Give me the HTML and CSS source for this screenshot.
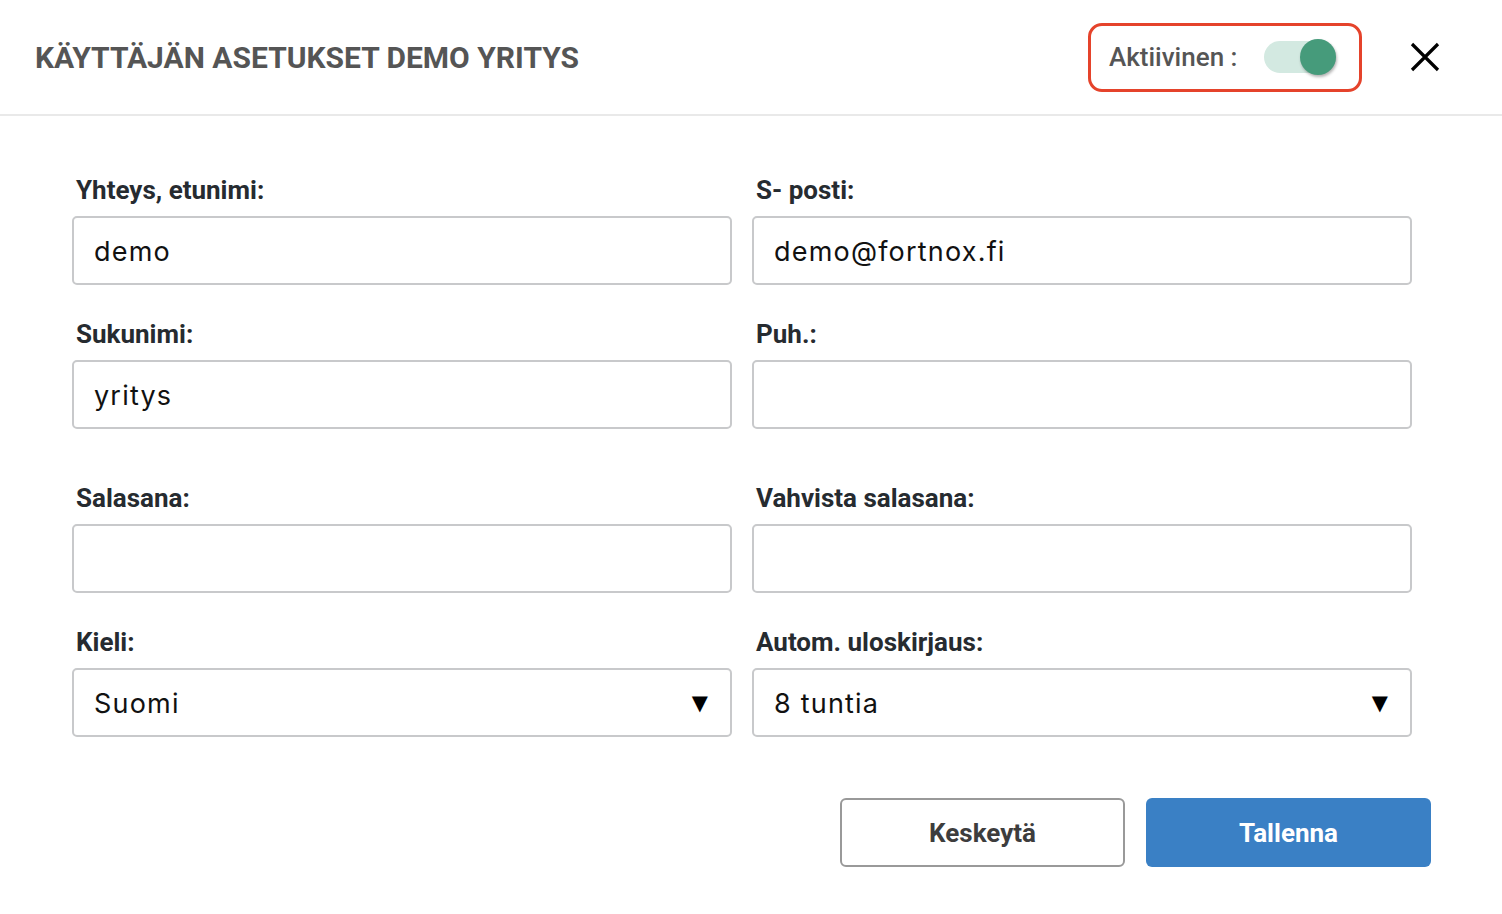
FILE: index.html
```html
<!DOCTYPE html>
<html lang="fi">
<head>
    <meta charset="UTF-8">
    <meta name="viewport" content="width=device-width, initial-scale=1.0">
    <title>Käyttäjän asetukset</title>
    <link rel="stylesheet" href="styles.css">
</head>
<body>

    <div class="modal">
        <!-- Otsikko ja aktiivinen-kytkin -->
        <div class="modal-header">
            <h1>KÄYTTÄJÄN ASETUKSET DEMO YRITYS</h1>
            <div class="header-actions">
                <label class="status-box">
                    <span>Aktiivinen :</span>
                    <span class="switch">
                        <span class="switch-knob"></span>
                    </span>
                </label>
                <button class="close-button" aria-label="Sulje">
                    <svg width="30" height="30" viewBox="0 0 30 30">
                        <path d="M2 2 L28 28 M28 2 L2 28" stroke="#000" stroke-width="3.2" fill="none"/>
                    </svg>
                </button>
            </div>
        </div>

        <!-- Lomake -->
        <div class="modal-body">
            <div class="form-grid">
                <div class="field">
                    <label>Yhteys, etunimi:</label>
                    <input type="text" value="demo">
                </div>
                <div class="field">
                    <label>S- posti:</label>
                    <input type="text" value="demo@fortnox.fi">
                </div>
                <div class="field">
                    <label>Sukunimi:</label>
                    <input type="text" value="yritys">
                </div>
                <div class="field">
                    <label>Puh.:</label>
                    <input type="text" value="">
                </div>
                <div class="field spaced">
                    <label>Salasana:</label>
                    <input type="password" value="">
                </div>
                <div class="field spaced">
                    <label>Vahvista salasana:</label>
                    <input type="password" value="">
                </div>
                <div class="field">
                    <label>Kieli:</label>
                    <div class="select-wrap">
                        <select>
                            <option>Suomi</option>
                            <option>Svenska</option>
                            <option>English</option>
                        </select>
                        <span class="select-arrow">▼</span>
                    </div>
                </div>
                <div class="field">
                    <label>Autom. uloskirjaus:</label>
                    <div class="select-wrap">
                        <select>
                            <option>8 tuntia</option>
                            <option>4 tuntia</option>
                            <option>1 tunti</option>
                        </select>
                        <span class="select-arrow">▼</span>
                    </div>
                </div>
            </div>

            <div class="modal-footer">
                <button class="btn btn-cancel">Keskeytä</button>
                <button class="btn btn-save">Tallenna</button>
            </div>
        </div>
    </div>

</body>
</html>
```

FILE: styles.css
```css
html, body {
    margin: 0;
    padding: 0;
    background-color: #fff;
}

body {
    font-family: Roboto, "Liberation Sans", sans-serif;
}

.modal-header {
    display: flex;
    align-items: center;
    justify-content: space-between;
    height: 114px;
    padding: 0 62px 0 35px;
    border-bottom: 2px solid #e9e9e9;
}

.modal-header h1 {
    margin: 0;
    font-size: 30px;
    font-weight: 700;
    color: #555;
}

.header-actions {
    display: flex;
    align-items: center;
    gap: 48px;
}

.status-box {
    display: flex;
    align-items: center;
    justify-content: space-between;
    box-sizing: border-box;
    width: 274px;
    height: 69px;
    padding: 0 23px 0 18px;
    border: 3px solid #e5432b;
    border-radius: 14px;
    font-size: 26px;
    font-weight: 500;
    color: #555;
}

/* Kytkin */
.switch {
    position: relative;
    width: 72px;
    height: 32px;
    border-radius: 16px;
    background-color: #d3e9e1;
}

.switch-knob {
    position: absolute;
    right: 0;
    top: -2px;
    width: 36px;
    height: 36px;
    border-radius: 50%;
    background-color: #469b7b;
    box-shadow: 1px 2px 3px rgba(0, 0, 0, 0.3);
}

.close-button {
    display: flex;
    padding: 0;
    border: none;
    background: none;
    cursor: pointer;
}

.modal-body {
    padding: 60px 71px 40px 72px;
}

.form-grid {
    display: grid;
    grid-template-columns: 660px 660px;
    column-gap: 20px;
    row-gap: 35px;
}

.field {
    display: flex;
    flex-direction: column;
}

.field.spaced {
    margin-top: 20px;
}

.field label {
    margin: 0 0 12px 4px;
    font-size: 26px;
    line-height: 28px;
    font-weight: 700;
    color: #262b30;
}

.field input,
.field select {
    box-sizing: border-box;
    width: 100%;
    height: 69px;
    padding: 2px 20px 0 20px;
    border: 2px solid #c8c9cb;
    border-radius: 5px;
    background-color: #fff;
    font-family: Inter, "Open Sans", sans-serif;
    font-size: 27px;
    letter-spacing: 1.2px;
    color: #111;
    outline: none;
}

.select-wrap {
    position: relative;
}

.field select {
    appearance: none;
    -webkit-appearance: none;
}

.select-arrow {
    position: absolute;
    right: 24px;
    top: 50%;
    transform: translateY(-50%);
    font-family: "DejaVu Sans", sans-serif;
    font-size: 21px;
    color: #000;
    pointer-events: none;
}

.modal-footer {
    display: flex;
    justify-content: flex-end;
    gap: 21px;
    margin-top: 61px;
}

.btn {
    width: 285px;
    height: 69px;
    border-radius: 6px;
    font-family: Roboto, sans-serif;
    font-size: 26px;
    font-weight: 700;
    cursor: pointer;
}

.btn-cancel {
    background-color: #fff;
    border: 2px solid #999;
    color: #3d3d3d;
}

.btn-save {
    background-color: #3a80c5;
    border: none;
    color: #fff;
}
```
